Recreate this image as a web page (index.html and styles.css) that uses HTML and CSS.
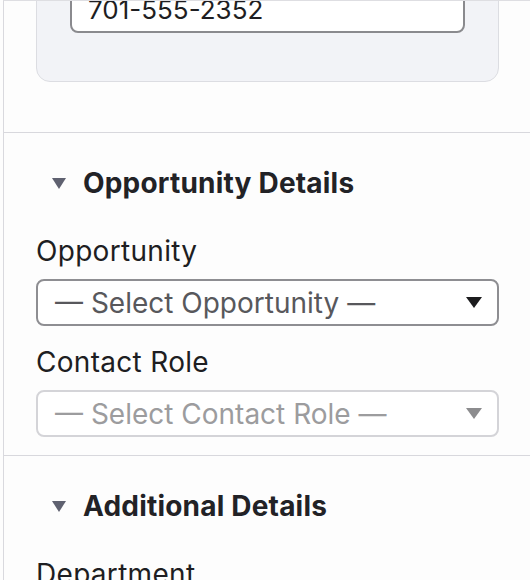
FILE: index.html
```html
<!DOCTYPE html>
<html lang="en">
<head>
  <meta charset="UTF-8" />
  <meta name="viewport" content="width=device-width, initial-scale=1" />
  <title>Contact | Details</title>
  <link rel="stylesheet" href="styles.css">
</head>
<body>

  <div class="panel">
    <div class="panel-scroll">

      <section class="section section-phone">
        <div class="card">
          <input type="text" class="text-input" value="701-555-2352" />
        </div>
      </section>

      <section class="section">
        <h2 class="section-title"><span class="caret"></span>Opportunity Details</h2>

        <label class="field-label">Opportunity</label>
        <div class="select-box">
          <span>— Select Opportunity —</span>
          <svg class="select-arrow" width="16" height="11" viewBox="0 0 16 11"><path d="M0 0h16L8 11z" /></svg>
        </div>

        <label class="field-label">Contact Role</label>
        <div class="select-box disabled">
          <span>— Select Contact Role —</span>
          <svg class="select-arrow" width="16" height="11" viewBox="0 0 16 11"><path d="M0 0h16L8 11z" /></svg>
        </div>
      </section>

      <section class="section">
        <h2 class="section-title"><span class="caret"></span>Additional Details</h2>

        <label class="field-label">Department</label>
      </section>

    </div>
  </div>

</body>
</html>
```

FILE: styles.css
```css
body {
  margin: 0;
  padding: 0;
  background: #fdfdfd;
  font-family: Inter, "Liberation Sans", sans-serif;
  color: #1e1e22;
}
.panel {
  margin-left: 3px;
  height: 580px;
  border-left: 1px solid #d9d9de;
  border-top: 1px solid #dedee2;
  box-sizing: border-box;
  overflow: hidden;
}
/* scrolled part way down the form */
.panel-scroll {
  margin-top: -37px;
}
.section {
  padding: 32px 31px 0 32px;
  border-bottom: 1px solid #d8d8dd;
}
.section-phone {
  padding-top: 0;
  padding-bottom: 50px;
}
.card {
  background: #f2f3f7;
  border: 1px solid #dcdde2;
  border-radius: 14px;
  padding: 20px 33px 48px;
}
.text-input {
  display: block;
  box-sizing: border-box;
  width: 100%;
  height: 48px;
  padding: 0 16px;
  border: 2px solid #8a8a8e;
  border-radius: 8px;
  background: white;
  font-family: inherit;
  font-size: 26px;
  color: #1e1e22;
}
.section-title {
  display: flex;
  align-items: center;
  margin: 0 0 32px;
  font-size: 28px;
  line-height: 36px;
  font-weight: 700;
  letter-spacing: 0.2px;
  color: #222226;
}
.caret {
  width: 0;
  height: 0;
  margin: 0 17px 0 16px;
  border-left: 7.5px solid transparent;
  border-right: 7.5px solid transparent;
  border-top: 11px solid #5f6170;
}
.field-label {
  display: block;
  font-size: 28px;
  line-height: 37px;
  letter-spacing: 0.3px;
  margin-bottom: 9px;
}
.select-box {
  display: flex;
  align-items: center;
  justify-content: space-between;
  box-sizing: border-box;
  height: 47px;
  padding: 0 15px 0 17px;
  margin-bottom: 18px;
  border: 2px solid #8e8e92;
  border-radius: 8px;
  background: white;
  font-size: 28px;
  color: #58585c;
}
.select-arrow path {
  fill: #1c1c1e;
}
.select-box.disabled {
  border-color: #d4d4d8;
  color: #9c9c9e;
}
.select-box.disabled .select-arrow path {
  fill: #8c8c8e;
}
```
